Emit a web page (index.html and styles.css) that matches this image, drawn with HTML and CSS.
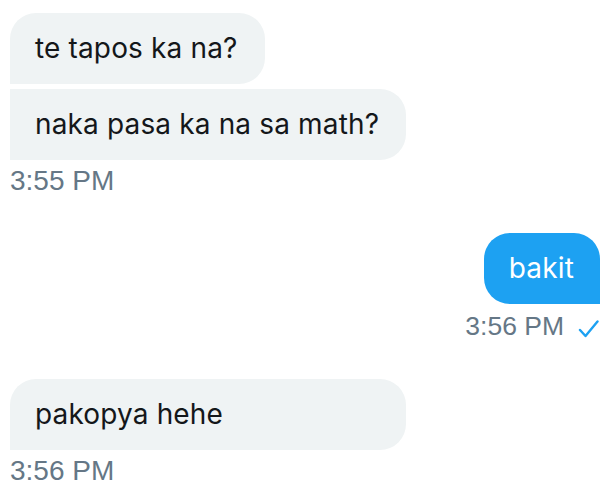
FILE: index.html
```html
<!DOCTYPE html>
<html>
<head>
<meta charset="utf-8">
<link rel="stylesheet" href="styles.css">
</head>
<body>
<div class="chat">
  <div class="group in">
    <div class="bubble first">te tapos ka na?</div>
    <div class="bubble mid">naka pasa ka na sa math?</div>
    <div class="time">3:55 PM</div>
  </div>
  <div class="group out">
    <div class="bubble">bakit</div>
    <div class="time">3:56 PM
      <svg class="check" width="22" height="18" viewBox="0 0 22 18"><path d="M2 10 L7.5 16 L19.5 1.5" fill="none" stroke="#1da1f2" stroke-width="2.4" stroke-linecap="round" stroke-linejoin="round"/></svg>
    </div>
  </div>
  <div class="group in">
    <div class="bubble wide">pakopya hehe</div>
    <div class="time">3:56 PM</div>
  </div>
</div>
</body>
</html>
```
FILE: styles.css
```css
html, body {
  margin: 0;
  padding: 0;
  background: #ffffff;
}
.chat {
  display: flex;
  flex-direction: column;
  padding: 13px 8px 0 10px;
  gap: 36px;
}
.group {
  display: flex;
  flex-direction: column;
}
.group.in {
  align-items: flex-start;
}
.group.out {
  align-items: flex-end;
}
.bubble {
  box-sizing: border-box;
  font-family: Inter, "Noto Sans", sans-serif;
  font-size: 28px;
  letter-spacing: 0.15px;
  line-height: 39px;
  padding: 16px 27px 16px 25px;
  color: #14171a;
  background: #eff3f4;
  border-radius: 26px 26px 26px 0;
}
.bubble + .bubble {
  margin-top: 5px;
}
.bubble.first {
  border-radius: 26px 26px 26px 0;
}
.bubble.mid {
  border-radius: 0 26px 26px 0;
}
.bubble.wide {
  min-width: 396px;
}
.out .bubble {
  background: #1da1f2;
  color: #ffffff;
  border-radius: 26px 26px 0 26px;
  padding: 16px 26px 16px 25px;
}
.time {
  margin-top: 4px;
  font-family: "Liberation Sans", Arial, sans-serif;
  font-size: 28px;
  line-height: 33px;
  color: #657786;
  display: flex;
  align-items: center;
  gap: 13px;
}
.out .time {
  font-size: 26.5px;
  margin-top: 6px;
  gap: 14px;
}
.check {
  margin-top: 4px;
}
```
